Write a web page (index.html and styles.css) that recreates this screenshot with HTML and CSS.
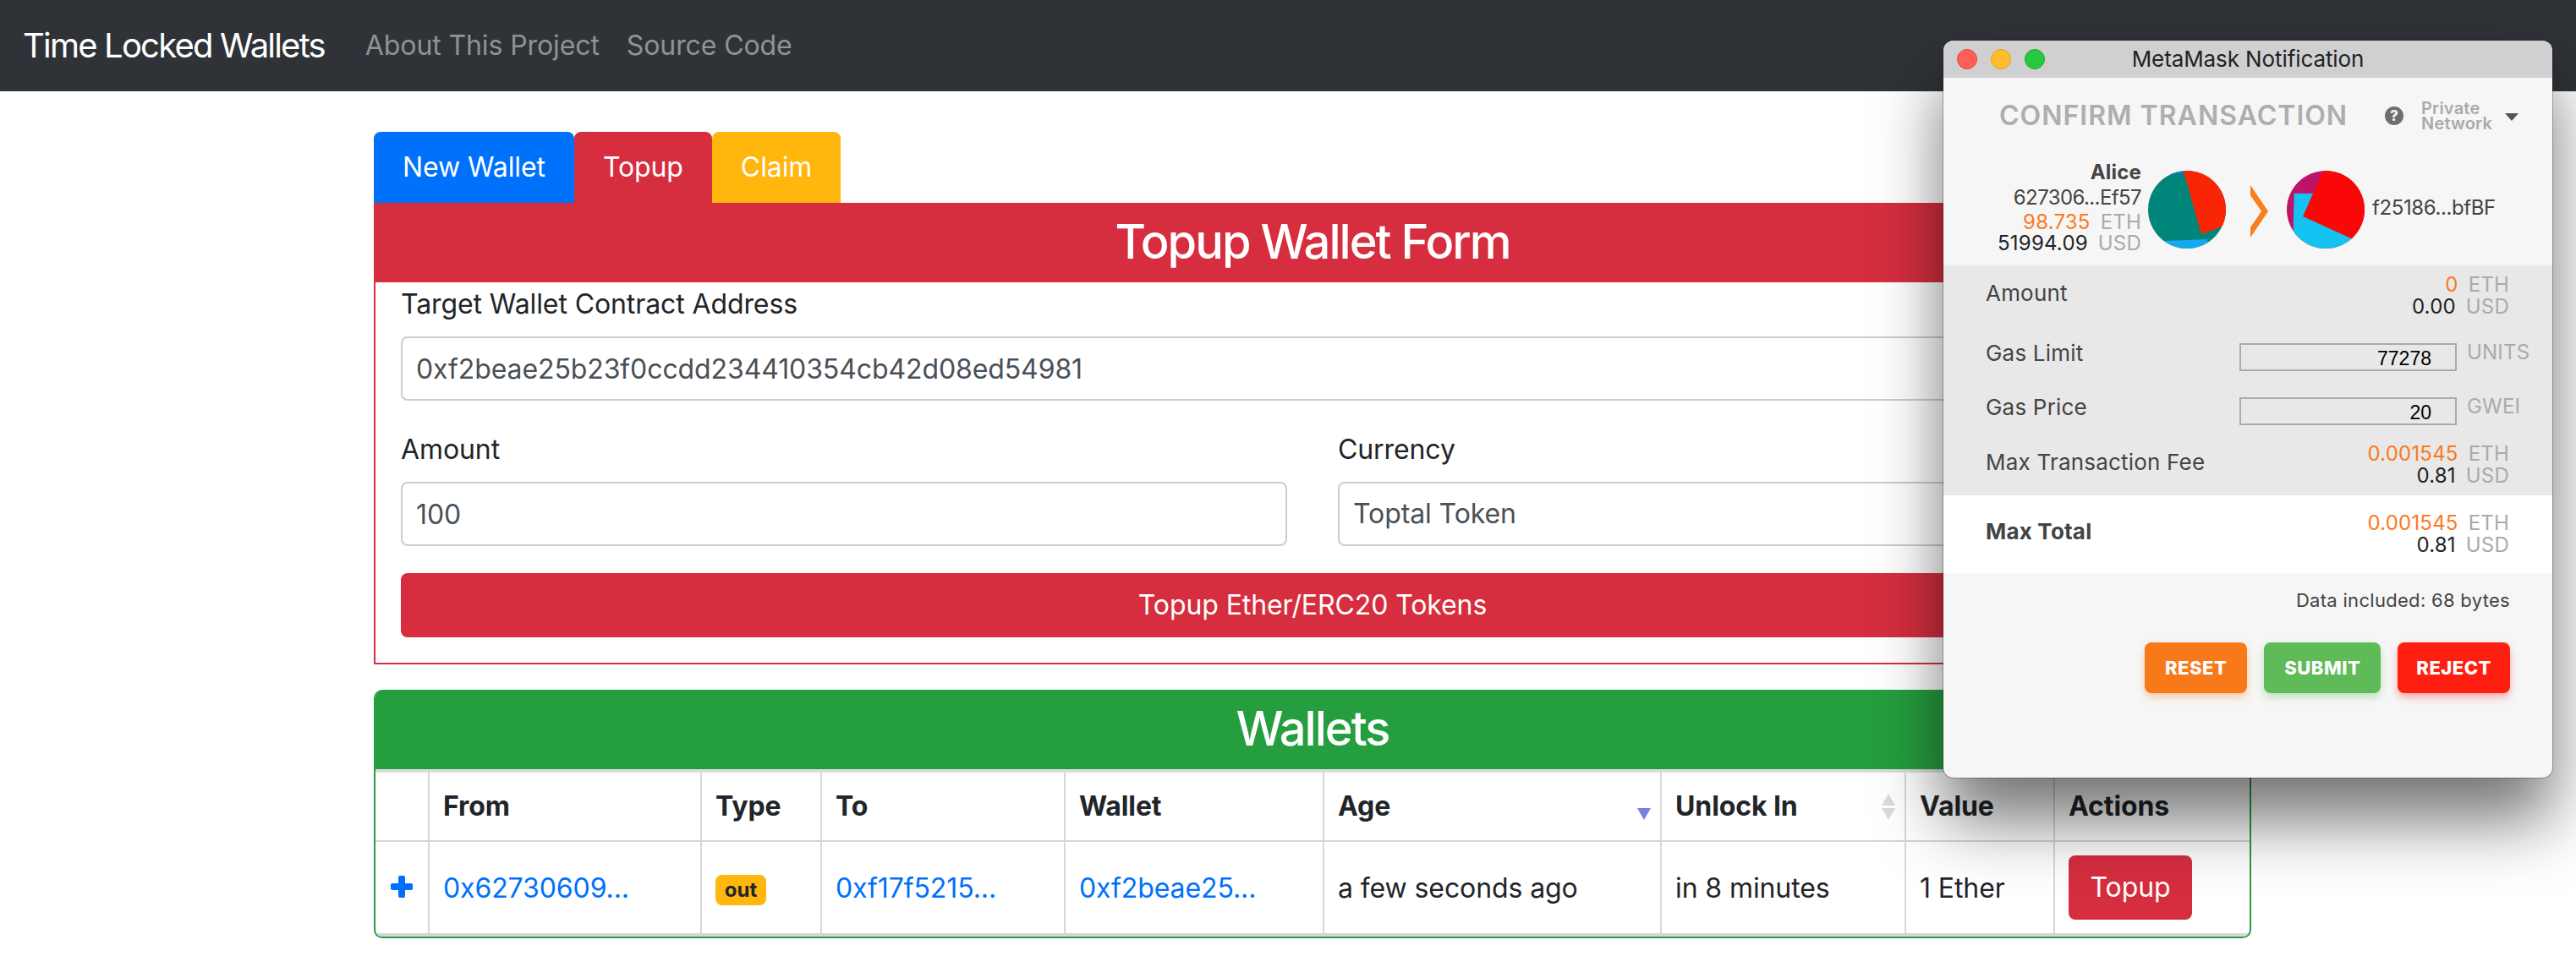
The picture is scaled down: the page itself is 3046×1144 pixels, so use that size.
FILE: index.html
```html
<!DOCTYPE html>
<html lang="en">
<head>
<meta charset="UTF-8">
<title>Time Locked Wallets</title>
<link rel="stylesheet" href="styles.css">
</head>
<body>

<!-- Navbar -->
<nav class="navbar">
    <a class="brand" href="#">Time Locked Wallets</a>
    <a class="nav-link" href="#">About This Project</a>
    <a class="nav-link" href="#">Source Code</a>
</nav>

<!-- Content -->
<div class="container">
    <div class="tabs">
        <a class="tab tab-blue" href="#">New Wallet</a>
        <a class="tab tab-red" href="#">Topup</a>
        <a class="tab tab-yellow" href="#">Claim</a>
    </div>

    <div class="card card-red">
        <h3 class="card-header header-red">Topup Wallet Form</h3>
        <form class="form">
            <label class="form-label">Target Wallet Contract Address</label>
            <input class="form-input" type="text" value="0xf2beae25b23f0ccdd234410354cb42d08ed54981">
            <div class="form-row">
                <div class="form-col">
                    <label class="form-label">Amount</label>
                    <input class="form-input" type="text" value="100">
                </div>
                <div class="form-col">
                    <label class="form-label">Currency</label>
                    <select class="form-input form-select"><option>Toptal Token</option></select>
                </div>
            </div>
            <button class="btn btn-block" type="button">Topup Ether/ERC20 Tokens</button>
        </form>
    </div>

    <div class="card card-green">
        <h3 class="card-header header-green">Wallets</h3>
        <table class="wallets">
            <colgroup>
                <col class="col-expand"><col class="col-from"><col class="col-type"><col class="col-to">
                <col class="col-wallet"><col class="col-age"><col class="col-unlock"><col class="col-value"><col class="col-actions">
            </colgroup>
            <thead>
                <tr>
                    <th></th>
                    <th>From</th>
                    <th>Type</th>
                    <th>To</th>
                    <th>Wallet</th>
                    <th><div class="th-sort">Age<span class="sort"><i class="up"></i><i class="down active"></i></span></div></th>
                    <th><div class="th-sort">Unlock In<span class="sort"><i class="up shown"></i><i class="down"></i></span></div></th>
                    <th>Value</th>
                    <th class="last">Actions</th>
                </tr>
            </thead>
            <tbody>
                <tr>
                    <td class="expand">
                        <svg class="plus" viewBox="0 0 26 26"><path d="M13 3v20M3 13h20" fill="none" stroke="#0070fa" stroke-width="8" stroke-linecap="round"/></svg>
                    </td>
                    <td><a href="#">0x62730609...</a></td>
                    <td><span class="badge">out</span></td>
                    <td><a href="#">0xf17f5215...</a></td>
                    <td><a href="#">0xf2beae25...</a></td>
                    <td>a few seconds ago</td>
                    <td>in 8 minutes</td>
                    <td>1 Ether</td>
                    <td class="last"><button class="btn btn-small" type="button">Topup</button></td>
                </tr>
            </tbody>
        </table>
    </div>
</div>

<!-- MetaMask popup window -->
<div class="mm-window">
    <div class="mm-titlebar">
        <span class="light light-red"></span>
        <span class="light light-yellow"></span>
        <span class="light light-green"></span>
        <span class="mm-title">MetaMask Notification</span>
    </div>

    <div class="mm-top">
        <span class="mm-heading">CONFIRM TRANSACTION</span>
        <span class="mm-help">?</span>
        <span class="mm-network">Private<br>Network</span>
        <span class="mm-caret"></span>
    </div>

    <div class="mm-identities">
        <div class="mm-from">
            <div class="mm-name">Alice</div>
            <div class="mm-addr">627306...Ef57</div>
            <div class="mm-bal"><span class="orange">98.735</span><span class="unit">ETH</span></div>
            <div class="mm-usd"><span>51994.09</span><span class="unit">USD</span></div>
        </div>
        <svg class="jazz" viewBox="0 0 92 92">
            <circle cx="46" cy="46" r="46" fill="#00857a"/>
            <clipPath id="clipA"><circle cx="46" cy="46" r="46"/></clipPath>
            <g clip-path="url(#clipA)">
                <polygon points="20,0 41.7,0 43,2 27,5" fill="#1b76d8"/>
                <polygon points="41.7,0 63,75 100,62 100,0" fill="#fa2507"/>
                <polygon points="20,83 70,81 72,100 20,100" fill="#18a8f0"/>
            </g>
        </svg>
        <svg class="chevron" viewBox="0 0 21 62"><polygon points="0,0 21,31 0,62 0,50 13,31 0,12" fill="#fa7f1b"/></svg>
        <svg class="jazz jazz-to" viewBox="0 0 92 92">
            <circle cx="46" cy="46" r="46" fill="#be1468"/>
            <clipPath id="clipB"><circle cx="46" cy="46" r="46"/></clipPath>
            <g clip-path="url(#clipB)">
                <polygon points="8.7,26.7 40,27 80,80 60,100 10,100 7.7,70" fill="#15c3f2"/>
                <polygon points="43,0 19,54 76,80 100,100 100,0" fill="#fa0707"/>
            </g>
        </svg>
        <div class="mm-to">f25186...bfBF</div>
    </div>

    <div class="mm-details">
        <div class="mm-row">
            <span class="mm-label">Amount</span>
            <div class="mm-values">
                <div><span class="orange">0</span><span class="unit">ETH</span></div>
                <div><span>0.00</span><span class="unit">USD</span></div>
            </div>
        </div>
        <div class="mm-row mm-gas mm-gas-limit">
            <span class="mm-label">Gas Limit</span>
            <input class="mm-input" type="text" value="77278">
            <span class="unit mm-gas-unit">UNITS</span>
        </div>
        <div class="mm-row mm-gas mm-gas-price">
            <span class="mm-label">Gas Price</span>
            <input class="mm-input" type="text" value="20">
            <span class="unit mm-gas-unit">GWEI</span>
        </div>
        <div class="mm-row mm-fee">
            <span class="mm-label">Max Transaction Fee</span>
            <div class="mm-values">
                <div><span class="orange">0.001545</span><span class="unit">ETH</span></div>
                <div><span>0.81</span><span class="unit">USD</span></div>
            </div>
        </div>
    </div>

    <div class="mm-total">
        <div class="mm-row">
            <span class="mm-label mm-bold">Max Total</span>
            <div class="mm-values">
                <div><span class="orange">0.001545</span><span class="unit">ETH</span></div>
                <div><span>0.81</span><span class="unit">USD</span></div>
            </div>
        </div>
    </div>

    <div class="mm-data">Data included: 68 bytes</div>

    <div class="mm-buttons">
        <button class="mm-btn mm-reset" type="button">RESET</button>
        <button class="mm-btn mm-submit" type="button">SUBMIT</button>
        <button class="mm-btn mm-reject" type="button">REJECT</button>
    </div>
</div>

</body>
</html>
```

FILE: styles.css
```css
/* Page */
body {
    margin: 0;
    font-family: Inter, "Liberation Sans", sans-serif;
    font-size: 32px;
    line-height: 48px;
    color: #212529;
    background-color: #fff;
    letter-spacing: -0.1px;
}

a {
    text-decoration: none;
}

/* Navbar */
.navbar {
    display: flex;
    align-items: center;
    height: 108px;
    padding-left: 27px;
    background-color: #2f3337;
}

.brand {
    font-size: 40px;
    letter-spacing: -1.8px;
    color: #fff;
    margin-right: 48px;
}

.nav-link {
    color: #909296;
    margin-right: 32px;
}

/* Content */
.container {
    width: 2220px;
    margin: 48px 0 0 442px;
}

.tabs {
    display: flex;
}

.tab {
    padding: 18px 34px;
    color: #fff;
    border-radius: 8px 8px 0 0;
}

.tab-blue { background-color: #0071fb; }
.tab-red { background-color: #d62e3f; }
.tab-yellow { background-color: #ffb60d; }

.card {
    border: 2px solid;
    border-top: 0;
}

.card-red {
    border-color: #d62e3f;
}

.card-green {
    margin-top: 30px;
    border-color: #259e3f;
    border-radius: 10px;
    overflow: hidden;
}

.card-header {
    margin: 0;
    height: 94px;
    font-size: 56px;
    line-height: 92px;
    font-weight: 500;
    text-align: center;
    color: #fff;
    letter-spacing: -2px;
}

.header-red {
    margin: 0 -2px;
    background-color: #d62e3f;
}

.header-green {
    margin: 0 -2px;
    background-color: #259e3f;
}

/* Form */
.form {
    padding: 0 30px 30px;
}

.form-label {
    display: block;
    padding-top: 2px;
    margin-bottom: 14px;
}

.form-input {
    display: block;
    box-sizing: border-box;
    width: 100%;
    height: 76px;
    padding: 0 16px;
    font: inherit;
    letter-spacing: inherit;
    color: #495057;
    background-color: #fff;
    border: 2px solid #c8ccd4;
    border-radius: 8px;
}

.form-select {
    appearance: none;
}

.form-row {
    display: flex;
    gap: 60px;
    margin-top: 32px;
}

.form-col {
    flex: 1;
}

.btn {
    font: inherit;
    letter-spacing: inherit;
    color: #fff;
    background-color: #d62e3f;
    border: 0;
    border-radius: 8px;
}

.btn-block {
    display: block;
    width: 100%;
    height: 76px;
    margin-top: 32px;
}

.btn-small {
    display: block;
    width: 146px;
    height: 76px;
}

/* Wallets table */
.wallets {
    width: 100%;
    table-layout: fixed;
    border-collapse: separate;
    border-spacing: 0;
    border-top: 4px solid #dcdcdc;
    border-bottom: 4px solid #d6d6d6;
}

.col-expand { width: 64px; }
.col-from { width: 322px; }
.col-type { width: 142px; }
.col-to { width: 288px; }
.col-wallet { width: 306px; }
.col-age { width: 399px; }
.col-unlock { width: 289px; }
.col-value { width: 176px; }
.col-actions { width: 230px; }

.wallets th,
.wallets td {
    padding: 0 0 0 16px;
    text-align: left;
    border-right: 2px solid #d8d8d8;
}

.wallets th {
    height: 80px;
    font-weight: 700;
    border-bottom: 2px solid #d6d6d6;
}

.wallets td {
    height: 106px;
    padding-top: 2px;
}

.wallets a {
    color: #0070fa;
}

.wallets .last {
    border-right: 0;
}

.wallets td.last {
    padding-top: 0;
}

.wallets .expand {
    padding: 0;
    text-align: center;
}

.plus {
    display: block;
    width: 26px;
    height: 26px;
    margin: -2px auto 0;
}

.badge {
    display: inline-block;
    width: 60px;
    height: 36px;
    font-size: 24px;
    line-height: 36px;
    font-weight: 700;
    text-align: center;
    letter-spacing: 0;
    vertical-align: middle;
    color: #212529;
    background-color: #ffb60d;
    border-radius: 8px;
}

.th-sort {
    display: flex;
    align-items: center;
    justify-content: space-between;
    padding-right: 11px;
}

.sort {
    display: flex;
    flex-direction: column;
    gap: 3px;
}

.sort i {
    display: block;
    width: 0;
    height: 0;
    border-left: 8px solid transparent;
    border-right: 8px solid transparent;
}

.sort .up {
    border-bottom: 14px solid transparent;
}

.sort .up.shown {
    border-bottom-color: #dcdcdc;
}

.sort .down {
    border-top: 14px solid #dcdcdc;
}

.sort .down.active {
    border-top-color: #7a7fe0;
}

/* MetaMask window */
.mm-window {
    position: absolute;
    left: 2298px;
    top: 48px;
    width: 720px;
    height: 872px;
    font-family: Inter, "Liberation Sans", sans-serif;
    font-size: 24px;
    line-height: 26px;
    letter-spacing: 0.2px;
    color: #444;
    background-color: #f6f6f6;
    border-radius: 12px;
    overflow: hidden;
    box-shadow: 0 50px 80px rgba(0, 0, 0, 0.55), 0 0 0 1px rgba(0, 0, 0, 0.25);
}

.mm-titlebar {
    position: relative;
    display: flex;
    align-items: center;
    gap: 16px;
    box-sizing: border-box;
    height: 44px;
    padding-left: 16px;
    background-color: #d0d0d0;
}

.light {
    box-sizing: border-box;
    width: 24px;
    height: 24px;
    border-radius: 50%;
    border: 1px solid;
}

.light-red { background-color: #ff5f57; border-color: #e0443e; }
.light-yellow { background-color: #ffbd2e; border-color: #dea123; }
.light-green { background-color: #28c940; border-color: #1aab29; }

.mm-title {
    position: absolute;
    left: 0;
    right: 0;
    text-align: center;
    font-size: 26px;
    letter-spacing: -0.1px;
    color: #222;
}

.mm-top {
    display: flex;
    align-items: center;
    height: 90px;
    padding-left: 66px;
}

.mm-heading {
    width: 456px;
    font-size: 32px;
    font-weight: 600;
    letter-spacing: 1px;
    color: #aeaeae;
}

.mm-help {
    width: 22px;
    height: 22px;
    margin-right: 21px;
    font-size: 17px;
    line-height: 22px;
    font-weight: 800;
    letter-spacing: 0;
    text-align: center;
    color: #f6f6f6;
    background-color: #6f6f6f;
    border-radius: 50%;
}

.mm-network {
    width: 99px;
    font-size: 20px;
    line-height: 18px;
    font-weight: 600;
    color: #aaa;
}

.mm-caret {
    width: 0;
    height: 0;
    margin-top: 2px;
    border-left: 8px solid transparent;
    border-right: 8px solid transparent;
    border-top: 9px solid #555;
}

.mm-identities {
    display: flex;
    align-items: flex-start;
    height: 132px;
}

.mm-from {
    width: 234px;
    padding-top: 7px;
    text-align: right;
    flex-shrink: 0;
}

.mm-name {
    line-height: 30px;
    font-weight: 700;
}

.mm-addr {
    line-height: 30px;
    letter-spacing: -0.6px;
}

.mm-bal {
    line-height: 28px;
}

.mm-usd {
    line-height: 22px;
    color: #222;
}

.jazz {
    width: 92px;
    height: 92px;
    margin: 20px 0 0 8px;
    flex-shrink: 0;
}

.chevron {
    width: 21px;
    height: 62px;
    margin: 37px 0 0 29px;
    flex-shrink: 0;
}

.jazz-to {
    margin-left: 22px;
}

.mm-to {
    margin: 48px 0 0 9px;
    line-height: 32px;
    letter-spacing: -0.4px;
}

.orange {
    color: #fb7a21;
}

.unit {
    margin-left: 12px;
    color: #aaa;
}

.mm-details {
    box-sizing: border-box;
    height: 272px;
    padding: 10px 51px 0 50px;
    background-color: #e8e8e8;
}

.mm-total {
    box-sizing: border-box;
    height: 92px;
    padding: 20px 51px 0 50px;
    background-color: #fff;
}

.mm-row {
    display: flex;
    align-items: flex-start;
    justify-content: space-between;
}

.mm-label {
    font-size: 26px;
    line-height: 46px;
    flex: 1;
}

.mm-bold {
    font-weight: 700;
}

.mm-values {
    text-align: right;
    color: #222;
}

.mm-gas .mm-label {
    line-height: 24px;
}

.mm-gas-limit {
    margin-top: 30px;
}

.mm-gas-price {
    margin-top: 31px;
}

.mm-fee {
    margin-top: 21px;
}

.mm-input {
    box-sizing: border-box;
    width: 257px;
    height: 33px;
    padding: 4px 28px 0 0;
    font-family: "Liberation Sans", sans-serif;
    font-size: 23px;
    text-align: right;
    color: #000;
    background: transparent;
    border: 2px solid #aaa;
}

.mm-gas-unit {
    width: 50px;
    line-height: 22px;
    white-space: nowrap;
}

.mm-data {
    padding: 20px 50px 0 0;
    font-size: 22px;
    line-height: 24px;
    letter-spacing: 0.3px;
    text-align: right;
}

.mm-buttons {
    display: flex;
    justify-content: flex-end;
    gap: 20px;
    margin-top: 38px;
    padding-right: 50px;
}

.mm-btn {
    height: 60px;
    padding: 0 24px;
    font-family: Inter, "Liberation Sans", sans-serif;
    font-size: 22px;
    font-weight: 800;
    letter-spacing: 0.5px;
    color: #fff;
    border: 0;
    border-radius: 8px;
}

.mm-reset {
    background-color: #f7791a;
    box-shadow: 0 5px 10px rgba(247, 121, 26, 0.35);
}

.mm-submit {
    background-color: #5fbb58;
    box-shadow: 0 5px 10px rgba(95, 187, 88, 0.35);
}

.mm-reject {
    padding: 0 22px;
    background-color: #ff1f12;
    box-shadow: 0 5px 10px rgba(255, 31, 18, 0.35);
}
```
